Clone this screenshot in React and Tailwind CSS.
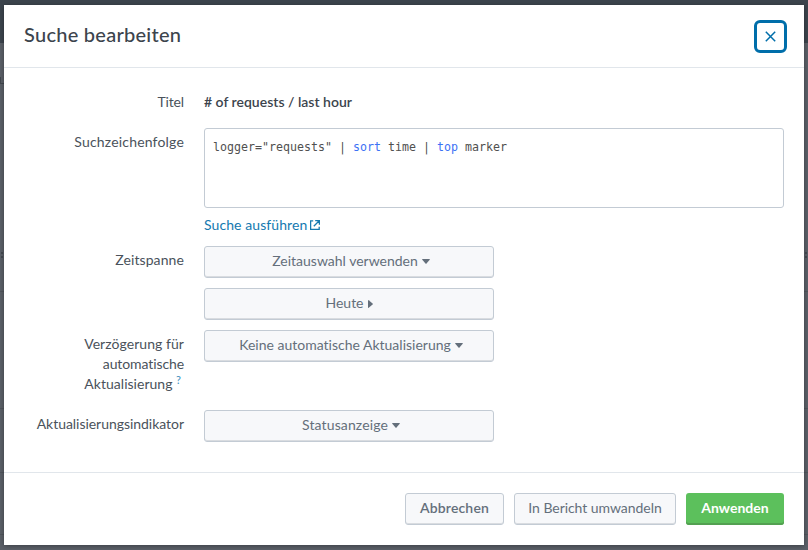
import React from "react";

const caretDown = (
  <svg width="8" height="5" viewBox="0 0 8 5" className="ml-1 mt-px shrink-0" fill="currentColor">
    <path d="M0.6 0h6.8q.8 0 .3.7L4.5 4.6q-.5.6-1 0L.3.7Q-.2 0 .6 0z" />
  </svg>
);
const caretRight = (
  <svg width="5" height="8" viewBox="0 0 5 8" className="ml-1 mt-0.5 shrink-0" fill="currentColor">
    <path d="M0 .6v6.8q0 .8.7.3L4.6 4.5q.6-.5 0-1L.7.3Q0-.2 0 .6z" />
  </svg>
);

function Button({ children, className = "" }) {
  return (
    <button
      type="button"
      className={`flex h-8 items-center justify-center whitespace-nowrap rounded-[3px] border border-[#c3cbd4] bg-[#f7f8fa] pb-0.5 text-[#646f7b] shadow-[inset_0_-1px_0_#d9dce0] ${className}`}
    >
      {children}
    </button>
  );
}

function Row({ label, children, className = "" }) {
  return (
    <div className={`flex ${className}`}>
      <div className="w-40 shrink-0 pt-1 text-right leading-5 text-[#4a525b]">{label}</div>
      <div className="ml-5 grow">{children}</div>
    </div>
  );
}

function Backdrop() {
  return (
    <div className="absolute inset-0 flex flex-col bg-[#5b6068]">
      <div className="h-[43px] shrink-0 bg-[#3c444d]" />
      <div className="flex h-[209px] shrink-0 items-start pt-[34px]">
        <span className="h-[7px] w-1 border-b border-l border-[#42474e]" />
      </div>
      <div className="flex h-10 shrink-0 justify-between border-b border-[#50555c]">
        {[0, 1].map((i) => (
          <span key={i} className="mx-px flex flex-col gap-0.5">
            <i className="size-0.5 bg-[#454a51]" />
            <i className="size-0.5 bg-[#454a51]" />
          </span>
        ))}
      </div>
      <div className="h-[117px] shrink-0 border-b border-[#50555c]" />
      <div className="h-16 shrink-0 border-b border-[#50555c]" />
      <div className="h-[62px] shrink-0 border-b border-[#50555c]" />
    </div>
  );
}

export default function App() {
  return (
    <div className="relative h-[550px] w-[808px] overflow-hidden px-1 py-[5px] font-['Lato',sans-serif] text-sm text-[#3c444d] [font-variant-ligatures:none]">
      <Backdrop />
      <div className="relative flex h-[540px] flex-col bg-white shadow-[0_1px_5px_rgba(0,0,0,0.35)]">
        <header className="flex h-[63px] shrink-0 items-center justify-between border-b border-[#e1e6eb] pl-5 pr-[17px]">
          <h1 className="pb-[3px] text-[20px] font-medium tracking-[0.26px]">Suche bearbeiten</h1>
          <button
            type="button"
            aria-label="Schließen"
            className="flex size-[33px] items-center justify-center rounded-[6px] border-3 border-[#006eaa] pt-px text-[#006eaa]"
          >
            <svg width="11" height="11" viewBox="0 0 11 11" fill="none" stroke="currentColor" strokeWidth="1.5">
              <path d="M.8.8l9.4 9.4M10.2.8L.8 10.2" />
            </svg>
          </button>
        </header>

        <div className="h-[404px] shrink-0 px-5 pt-5">
          <Row label={<span className="tracking-[-0.15px]">Titel</span>} className="h-10">
            <div className="pt-1 font-semibold leading-5">
              <span># of requests / last hour</span>
            </div>
          </Row>
          <Row label={<span className="tracking-[0.18px]">Suchzeichenfolge</span>} className="h-[118px]">
            <div className="h-20 rounded-[3px] border border-[#c3cbd4] px-2 pt-2 font-['DejaVu_Sans_Mono',monospace] text-[11.63px] leading-5 text-[#505050]">
              logger="requests" | <span className="text-[#3c72f5]">sort</span> time |{" "}
              <span className="text-[#3c72f5]">top</span> marker
            </div>
            <a className="mt-[7px] flex items-center leading-5 text-[#1479b0]">
              <span className="tracking-[0.08px]">Suche ausführen</span>
              <svg width="10" height="10" viewBox="0 0 10 10" className="ml-[3px]" fill="none" stroke="currentColor" strokeWidth="1.3">
                <path d="M3.2.8H.6v8.6h8.6V6.8M5.2.6h4.2v4.2M9.2.8L3.8 6.2" />
              </svg>
            </a>
          </Row>
          <Row label={<span className="tracking-[0.1px]">Zeitspanne</span>} className="h-[84px]">
            <Button className="w-[290px] pl-1">
              <span>Zeitauswahl verwenden</span>
              {caretDown}
            </Button>
            <Button className="mt-2.5 w-[290px]">
              <span>Heute</span>
              {caretRight}
            </Button>
          </Row>
          <Row
            className="h-20"
            label={
              <>
                <span className="tracking-[0.06px]">Verzögerung für</span>
                <br />
                <span className="tracking-[-0.1px]">automatische</span>
                <br />
                <span className="tracking-[0.02px]">Aktualisierung</span>{" "}
                <sup className="mr-[3px] text-[11px] leading-none text-[#3c90c0]">?</sup>
              </>
            }
          >
            <Button className="w-[290px] pl-1">
              <span>Keine automatische Aktualisierung</span>
              {caretDown}
            </Button>
          </Row>
          <Row label={<span className="tracking-[-0.04px]">Aktualisierungsindikator</span>}>
            <Button className="w-[290px] pl-1">
              <span className="tracking-[0.12px]">Statusanzeige</span>
              {caretDown}
            </Button>
          </Row>
        </div>

        <footer className="flex grow justify-end gap-2.5 border-t border-[#e1e6eb] px-5 pt-5">
          <Button className="w-[99px] font-semibold tracking-[0.15px]">Abbrechen</Button>
          <Button className="w-[162px] tracking-[-0.05px]">In Bericht umwandeln</Button>
          <button
            type="button"
            className="flex h-8 w-[98px] items-center justify-center rounded-[3px] bg-[#5cc05c] pb-0.5 font-bold text-white shadow-[inset_0_-2px_0_#53a051]"
          >
            Anwenden
          </button>
        </footer>
      </div>
    </div>
  );
}
